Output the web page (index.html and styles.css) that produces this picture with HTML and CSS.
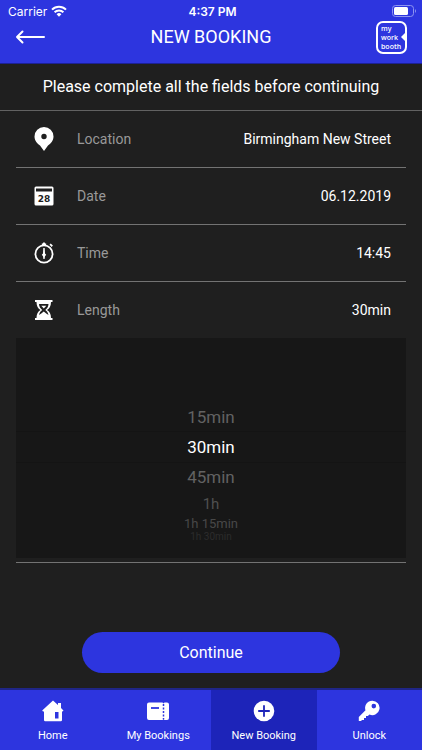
FILE: index.html
```html
<!DOCTYPE html>
<html lang="en">
<head>
<meta charset="utf-8">
<meta name="viewport" content="width=device-width, initial-scale=1">
<title>New Booking</title>
<link rel="stylesheet" href="styles.css">
</head>
<body>
<header class="header">
  <div class="status">
    <span class="carrier">Carrier
      <svg width="16" height="12" viewBox="0 0 16 12" aria-hidden="true"><g fill="none" stroke="#fff" stroke-width="2"><path d="M1 4.600a10 10 0 0 1 14 0"/><path d="M3.600 7.300a6.300 6.300 0 0 1 8.800 0"/></g><path d="M5.600 9.200a3.500 3.500 0 0 1 4.800 0L8 11.800z" fill="#fff"/></svg>
    </span>
    <span class="clock">4:37 PM</span>
    <svg class="battery" width="25" height="12" viewBox="0 0 25 12" aria-hidden="true"><rect x=".5" y=".5" width="21" height="11" rx="3" fill="none" stroke="#8e94f0"/><rect x="2" y="2" width="14" height="8" rx="1.5" fill="#fff"/><path d="M23 4q2 2 0 4z" fill="#8e94f0"/></svg>
  </div>
  <div class="navbar">
    <button class="back" type="button" aria-label="Back">
      <svg width="30" height="14" viewBox="0 0 30 14"><path d="M29 7H2M7.500 1.500L2 7l5.500 5.500" fill="none" stroke="#fff" stroke-width="2" stroke-linecap="round" stroke-linejoin="round"/></svg>
    </button>
    <h1 class="title">NEW BOOKING</h1>
    <div class="logo">my<br>work<br>booth<svg class="logo-notch" width="4" height="8" viewBox="0 0 4 8" aria-hidden="true"><path d="M4 0v8L0 4z" fill="#fff"/></svg></div>
  </div>
</header>

<main class="main">
  <p class="prompt">Please complete all the fields before continuing</p>
  <form class="form">
    <button class="field" type="button">
      <svg class="icon" width="20" height="24" viewBox="0 0 20 24" aria-hidden="true"><path fill="#fff" fill-rule="evenodd" d="M10 0a9.500 9.500 0 0 1 9.500 9.500c0 4.500-3 7.200-5.500 9L10 24l-4-5.500c-2.500-1.800-5.500-4.500-5.500-9A9.500 9.500 0 0 1 10 0zm0 6.800a2.700 2.700 0 1 0 0 5.400 2.700 2.700 0 0 0 0-5.400z"/></svg>
      <span class="name">Location</span><span class="value">Birmingham New Street</span>
    </button>
    <button class="field" type="button">
      <svg class="icon" width="20" height="20" viewBox="0 0 20 20" aria-hidden="true"><rect x=".5" y=".5" width="19" height="19" rx="1.500" fill="#fff"/><path d="M2 2.500h16v3H2z" fill="#1f1f1f"/><text class="day" x="10" y="16" text-anchor="middle">28</text></svg>
      <span class="name">Date</span><span class="value">06.12.2019</span>
    </button>
    <button class="field" type="button">
      <svg class="icon" width="20" height="22" viewBox="0 0 20 22" aria-hidden="true"><circle cx="10" cy="12" r="8.600" fill="none" stroke="#fff" stroke-width="1.800"/><path d="M7.800 1.500h1L9.200.6h1.600l.4.900h1v2.200H7.800zM15.500 2.800l1.200-1.200 2.200 2-1.200 1.300z" fill="#fff"/><path d="M9.300 6h1.400l.3 5.500 1.200 1.300L11 14.200 10.600 17H9.400L9 14.200l-1.200-1.400L9 11.500z" fill="#fff"/></svg>
      <span class="name">Time</span><span class="value">14:45</span>
    </button>
    <div class="length">
      <button class="field field-open" type="button" aria-expanded="true">
        <svg class="icon" width="20" height="22" viewBox="0 0 20 22" aria-hidden="true"><path d="M1 1h17.500v2H17c0 4-1.500 6.500-4 8 2.500 1.500 4 4 4 8h1.500v2H1v-2h1.500c0-4 1.500-6.500 4-8-2.500-1.500-4-4-4-8H1z" fill="#fff"/><path d="M5 5h9.500c0 2.500-1.500 4.600-3.200 6 1.700 1.200 2.700 2.800 3.200 5-1.500-1-3-2-4.700-3.500C8 14 6.500 15 5 16c.5-2.200 1.500-3.800 3.200-5C6.500 9.600 5 7.500 5 5z" fill="#1f1f1f"/><path d="M7.300 6.800h5L9.800 9.500z" fill="#fff"/></svg>
        <span class="name">Length</span><span class="value">30min</span>
      </button>
      <div class="picker" role="radiogroup" aria-label="Length">
        <label class="option"><input type="radio" name="length">15min</label>
        <label class="option selected"><input type="radio" name="length" checked>30min</label>
        <label class="option"><input type="radio" name="length">45min</label>
        <label class="option far"><input type="radio" name="length">1h</label>
        <label class="option farther"><input type="radio" name="length">1h 15min</label>
        <label class="option farthest"><input type="radio" name="length">1h 30min</label>
      </div>
    </div>
    <button class="continue" type="submit">Continue</button>
  </form>
</main>

<nav class="tabs">
  <a class="tab" href="#home">
    <svg width="22" height="22" viewBox="0 0 22 22" aria-hidden="true"><path fill="#fff" fill-rule="evenodd" d="M11 .5l5 4.500V3h3v5l2.500 2.500-1 1H20V20a1.200 1.200 0 0 1-1.200 1.200H3.200A1.200 1.200 0 0 1 2 20v-8.500H1l-.8-1zM13 12v6.500h3.500V12z"/></svg>
    Home</a>
  <a class="tab" href="#bookings">
    <svg width="24" height="22" viewBox="0 0 24 22" aria-hidden="true"><path fill="#fff" d="M3 2.500h13.500l1 1 1-1H21a2 2 0 0 1 2 2V18a2 2 0 0 1-2 2h-2.500l-1-1-1 1H3a2 2 0 0 1-2-2V4.500a2 2 0 0 1 2-2z"/><path d="M5 8h8" stroke="#2d35df" stroke-width="1.800"/><path d="M17.500 4v15" stroke="#2d35df" stroke-width="1.500" stroke-dasharray="2 1.500"/></svg>
    My Bookings</a>
  <a class="tab active" href="#new" aria-current="page">
    <svg width="22" height="22" viewBox="0 0 22 22" aria-hidden="true"><circle cx="11" cy="11" r="10.300" fill="#fff"/><path d="M11 5.200v11.600M5.200 11h11.600" stroke="#1d24b9" stroke-width="1.800"/></svg>
    New Booking</a>
  <a class="tab" href="#unlock">
    <svg width="22" height="22" viewBox="0 0 22 22" aria-hidden="true"><path fill="#fff" fill-rule="evenodd" d="M14.200.7a7.200 7.200 0 1 1-2.700 13.800L9.800 16H8v2H6v2H4l-1 1H.8v-4l6.700-6.700A7.200 7.200 0 0 1 14.200.7zM15.800 3.800a2.300 2.300 0 1 0 0 4.600 2.300 2.300 0 0 0 0-4.600z"/></svg>
    Unlock</a>
</nav>
</body>
</html>
```

FILE: styles.css
```css
* { box-sizing: border-box; }

body {
  margin: 0;
  min-height: 100vh;
  display: flex;
  flex-direction: column;
  background: #1f1f1f;
  color: #fff;
  font-family: Roboto, "Liberation Sans", sans-serif;
}

button {
  border: 0;
  padding: 0;
  background: none;
  color: inherit;
  font: inherit;
  cursor: pointer;
}

svg { display: block; }

.header {
  background: #2d35df;
  border-bottom: 1px solid #1c2194;
}

.status {
  display: grid;
  grid-template-columns: 1fr auto 1fr;
  align-items: center;
  height: 20px;
  padding: 2px 5px 0 8px;
  font-family: Inter, sans-serif;
  font-size: 12px;
}

.carrier {
  display: flex;
  align-items: center;
  gap: 4px;
}

.clock { font-weight: 600; }

.battery { justify-self: end; }

.navbar {
  display: grid;
  grid-template-columns: 1fr auto 1fr;
  align-items: center;
  height: 43px;
  padding: 0 15px 9px;
}

.back { justify-self: start; }

.title {
  margin: 0;
  font-size: 18px;
  font-weight: 400;
  line-height: 24px;
}

.logo {
  position: relative;
  justify-self: end;
  width: 31px;
  height: 33px;
  padding: 1px 0 0 3px;
  border: 2px solid #fff;
  border-radius: 7px;
  font-family: "Open Sans", sans-serif;
  font-size: 7px;
  font-weight: 600;
  line-height: 9px;
}

.logo-notch {
  position: absolute;
  right: 0;
  top: 10px;
}

.main {
  flex: 1;
  display: flex;
  flex-direction: column;
}

.prompt {
  margin: 0;
  padding: 11px 0;
  border-bottom: 1px solid #626262;
  font-size: 16px;
  line-height: 24px;
  text-align: center;
}

.form {
  display: flex;
  flex-direction: column;
  padding: 0 16px;
}

.field {
  display: flex;
  align-items: center;
  width: 100%;
  height: 57px;
  padding: 0 15px 0 18px;
  border-bottom: 1px solid #737373;
  font-size: 14px;
  line-height: 20px;
}

.field-open {
  height: 56px;
  border-bottom: 0;
}

.name {
  margin-left: 23px;
  color: #999;
}

.value { margin-left: auto; }

.day {
  font: 700 9px "DejaVu Sans", sans-serif;
  fill: #1f1f1f;
}

.length {
  padding-bottom: 4px;
  border-bottom: 1px solid #737373;
}

.picker {
  display: flex;
  flex-direction: column;
  align-items: center;
  height: 220px;
  padding-top: 64px;
  background: #171717;
}

.option {
  display: block;
  width: 100%;
  color: #626262;
  font-size: 17px;
  line-height: 30px;
  text-align: center;
}

.option input {
  position: absolute;
  appearance: none;
  margin: 0;
  opacity: 0;
}

.selected {
  box-shadow: 0 -1px #141414, 0 1px #141414;
  color: #fff;
}

.far {
  color: #505050;
  font-size: 15px;
  line-height: 24px;
}

.farther {
  color: #484848;
  font-size: 13px;
  line-height: 16px;
}

.farthest {
  color: #2c2c2c;
  font-size: 10px;
  line-height: 10px;
}

.continue {
  align-self: center;
  width: 66%;
  height: 41px;
  margin: 69px 0 15px;
  border-radius: 21px;
  background: #2d35df;
  font-size: 16px;
}

.tabs {
  display: grid;
  grid-template-columns: repeat(4, 1fr);
  border-top: 2px solid #1f2587;
  background: #2d35df;
}

.tab {
  display: flex;
  flex-direction: column;
  align-items: center;
  gap: 6px;
  padding: 10px 0 6px;
  color: #fff;
  font-size: 11px;
  line-height: 16px;
  text-decoration: none;
}

.active { background: #1d24b9; }
```
